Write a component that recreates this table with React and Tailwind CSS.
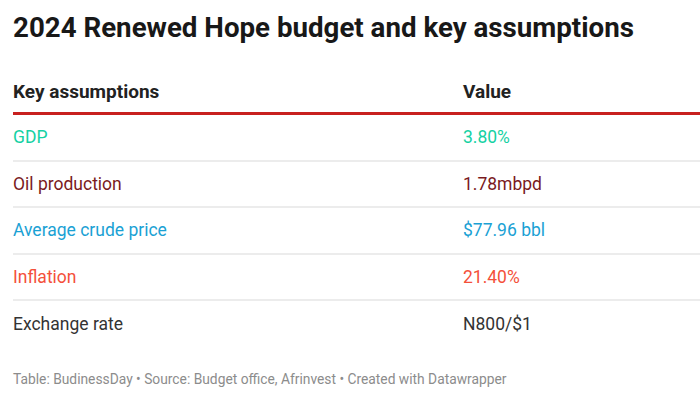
export default function App() {
  const rows = [
    { label: "GDP", value: "3.80%", color: "text-[#15d1a3]" },
    { label: "Oil production", value: "1.78mbpd", color: "text-[#7a1a1d]" },
    { label: "Average crude price", value: "$77.96 bbl", color: "text-[#1aa1d4]" },
    { label: "Inflation", value: "21.40%", color: "text-[#f4503a]" },
    { label: "Exchange rate", value: "N800/$1", color: "text-[#333333]" },
  ];

  return (
    <div className="w-[700px] h-[400px] bg-white overflow-hidden pl-[13px] font-['Roboto',sans-serif]">
      <h1 className="pt-[11px] text-[27.7px] leading-[34px] font-bold text-[#181818]">
        2024 Renewed Hope budget and key assumptions
      </h1>

      {/* Table header */}
      <div className="mt-[27px] flex items-center h-[43px] border-b-[3px] border-[#c8201f] text-[19px] font-bold text-[#222]">
        <div className="w-[450px]">Key assumptions</div>
        <div>Value</div>
      </div>

      {/* Rows */}
      {rows.map((r, i) => (
        <div
          key={r.label}
          className={`flex items-center h-[46.5px] text-[17.5px] ${r.color} ${
            i < rows.length - 1 ? "border-b-2 border-[#ececec]" : ""
          }`}
        >
          <div className="w-[450px]">{r.label}</div>
          <div>{r.value}</div>
        </div>
      ))}

      <p className="mt-[21px] text-[13.8px] leading-[20px] text-[#8c8c8c]">
        Table: BudinessDay • Source: Budget office, Afrinvest • Created with Datawrapper
      </p>
    </div>
  );
}
